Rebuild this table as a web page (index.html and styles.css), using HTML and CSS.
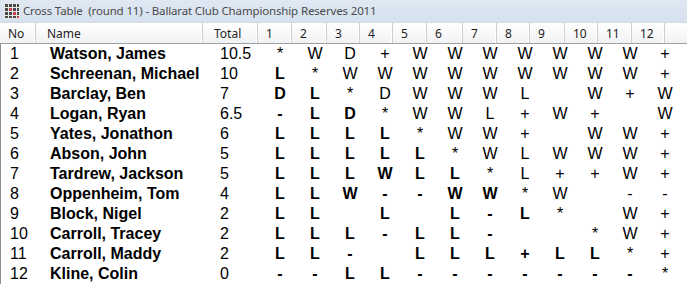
FILE: index.html
```html
<!DOCTYPE html>
<html>
<head>
<meta charset="utf-8">
<link rel="stylesheet" href="styles.css">
</head>
<body>
<div class="window">
  <div class="titlebar">
    <svg class="icon" width="16" height="16" viewBox="0 0 16 16">
      <rect x="0" y="0" width="16" height="16" fill="#e8e8e8"/>
      <g fill="#4a4a4a">
        <rect x="1" y="1" width="3" height="3"/><rect x="5" y="1" width="3" height="3"/><rect x="9" y="1" width="3" height="3"/><rect x="13" y="1" width="2" height="3"/>
        <rect x="1" y="5" width="3" height="3"/><rect x="9" y="5" width="3" height="3"/><rect x="13" y="5" width="2" height="3"/>
        <rect x="1" y="9" width="3" height="3"/><rect x="5" y="9" width="3" height="3"/><rect x="13" y="9" width="2" height="3"/>
        <rect x="1" y="13" width="3" height="2"/><rect x="5" y="13" width="3" height="2"/><rect x="9" y="13" width="3" height="2"/>
      </g>
      <g fill="#c8404a">
        <rect x="5" y="5" width="3" height="3"/><rect x="9" y="9" width="3" height="3"/><rect x="13" y="13" width="2" height="2"/>
      </g>
    </svg>
    <span class="title">Cross Table&nbsp; (round 11) - Ballarat Club Championship Reserves 2011</span>
  </div>
  <div class="header">
    <div class="hc hno">No</div>
    <div class="hc hname">Name</div>
    <div class="hc htotal">Total</div>
    <div class="hc">1</div><div class="hc">2</div><div class="hc">3</div><div class="hc">4</div>
    <div class="hc">5</div><div class="hc">6</div><div class="hc">7</div><div class="hc">8</div>
    <div class="hc">9</div><div class="hc">10</div><div class="hc">11</div><div class="hc">12</div>
    <div class="hfill"></div>
  </div>
  <div class="body" id="body"></div>
</div>
<script src="app.js"></script>
</body>
</html>
```
FILE: styles.css
```css
* { box-sizing: border-box; }
html, body { margin: 0; padding: 0; background: #ffffff; }
.window { width: 687px; height: 289px; overflow: hidden; background: #ffffff; }
.titlebar {
  height: 22px;
  display: flex;
  align-items: center;
  padding-left: 4px;
  gap: 3px;
  background: linear-gradient(#dfe8f3, #d6e1ee);
}
.icon { display: block; flex: none; }
.title {
  font-family: "Noto Sans", sans-serif;
  font-size: 11.5px;
  line-height: 22px;
  color: #4a4a4a;
  white-space: pre;
  letter-spacing: -0.15px;
}
.header {
  height: 22px;
  display: grid;
  grid-template-columns: 36px 167px 55px 34px 35px 33px 33px 34px 36px 34px 33px 35px 33px 34px 33px 1fr;
  background: linear-gradient(#ffffff, #f1f2f4);
  border-top: 1px solid #d5dbe3;
  border-bottom: 1px solid #a0a0a0;
}
.hc {
  font-family: "Noto Sans", sans-serif;
  font-size: 12px;
  line-height: 18px;
  padding-top: 2px;
  padding-left: 8px;
  color: #1e1e1e;
  border-right: 1px solid #d0d0d0;
  box-shadow: inset -1px 0 0 #ffffff;
  white-space: nowrap;
}
.hno { padding-left: 8px; }
.hname, .htotal { padding-left: 11px; }
.body {
  border-left: 1px solid #8c8c8c;
  font-family: "Liberation Sans", Arial, sans-serif;
  font-size: 16px;
  color: #000000;
}
.row {
  display: grid;
  grid-template-columns: 49px 170px 42.5px repeat(12, 35px);
  height: 20px;
  line-height: 20px;
}
.no { padding-left: 9px; }
.name { font-weight: bold; white-space: nowrap; }
.r { text-align: center; }
.b { font-weight: bold; }
```
FILE: app.js
```js
var data = [
  ["Watson, James","10.5","* W D + W W W W W W W +"],
  ["Schreenan, Michael","10","L * W W W W W W W W W +"],
  ["Barclay, Ben","7","D L * D W W W L _ W + W"],
  ["Logan, Ryan","6.5","- L D * W W L + W + _ W"],
  ["Yates, Jonathon","6","L L L L * W W + _ W W +"],
  ["Abson, John","5","L L L L L * W L W W W +"],
  ["Tardrew, Jackson","5","L L L W L L * L + + W +"],
  ["Oppenheim, Tom","4","L L W - - W W * W _ - -"],
  ["Block, Nigel","2","L L _ L _ L - L * _ W +"],
  ["Carroll, Tracey","2","L L L - L L - _ _ * W +"],
  ["Carroll, Maddy","2","L L - _ L L L + L L * +"],
  ["Kline, Colin","0","- - L L - - - - - - - *"]
];
var body = document.getElementById("body");
data.forEach(function (d, i) {
  var row = document.createElement("div");
  row.className = "row";
  var html = '<div class="no">' + (i + 1) + '</div><div class="name">' + d[0] + '</div><div class="total">' + d[1] + '</div>';
  d[2].split(" ").forEach(function (v, j) {
    var t = v === "_" ? "" : v;
    var cls = j < i ? "r b" : "r";
    html += '<div class="' + cls + '">' + t + '</div>';
  });
  row.innerHTML = html;
  body.appendChild(row);
});
```
